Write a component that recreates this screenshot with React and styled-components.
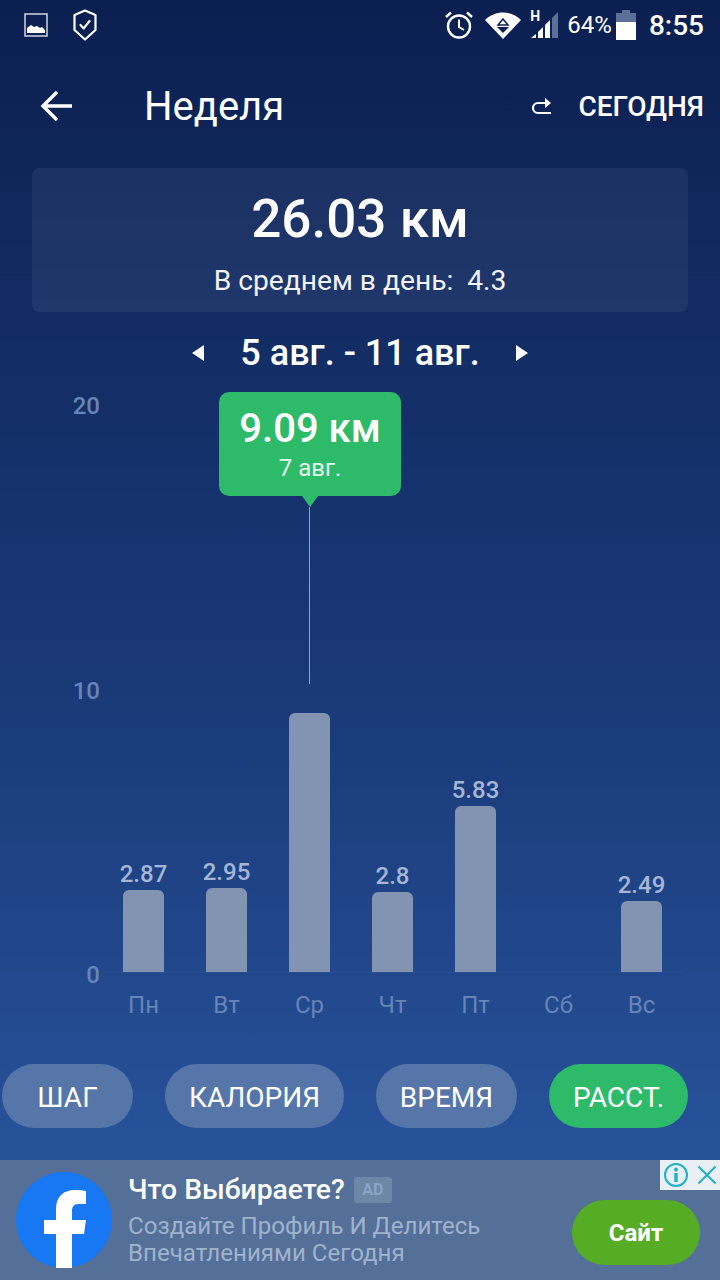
import React from 'react';
import styled, { createGlobalStyle } from 'styled-components';

const days = [
  { name: 'Пн', value: 2.87 },
  { name: 'Вт', value: 2.95 },
  { name: 'Ср', value: 9.09, hideLabel: true },
  { name: 'Чт', value: 2.8 },
  { name: 'Пт', value: 5.83 },
  { name: 'Сб', value: 0 },
  { name: 'Вс', value: 2.49 },
];

const tabs = [
  { label: 'ШАГ' },
  { label: 'КАЛОРИЯ' },
  { label: 'ВРЕМЯ' },
  { label: 'РАССТ.', active: true },
];

const PX_PER_KM = 28.45;

export default function App() {
  return (
    <Screen>
      <GlobalStyle />
      <StatusBar>
        <StatusGroup>
          <svg width="24" height="24" viewBox="0 0 24 24" style={{ marginLeft: 24 }}>
            <rect x="1" y="1" width="22" height="22" fill="none" stroke="#c3cbdc" strokeWidth="1.6" />
            <path d="M3 20v-5l4-3 3 2 3-1 3 2 2-1 3 3v3z" fill="#fff" />
          </svg>
          <svg width="24" height="32" viewBox="0 0 24 32" style={{ marginLeft: 25 }}>
            <path d="M12 1.500 22.500 6v15L12 30.500 1.500 21V6z" fill="none" stroke="#fff" strokeWidth="2.200" strokeLinejoin="round" />
            <path d="M7.500 16l3.200 3.400 5.800-7.400" fill="none" stroke="#fff" strokeWidth="2.200" strokeLinecap="round" strokeLinejoin="round" />
          </svg>
        </StatusGroup>
        <StatusGroup>
          <svg width="30" height="30" viewBox="0 0 30 30" style={{ marginRight: 11 }}>
            <circle cx="15" cy="16.500" r="11" fill="none" stroke="#fff" strokeWidth="2.400" />
            <path d="M15 9.500v7.500l5 3" fill="none" stroke="#fff" strokeWidth="2" />
            <path d="M2 7l5-4.500M28 7l-5-4.500" stroke="#fff" strokeWidth="2.400" />
          </svg>
          <svg width="36" height="28" viewBox="0 0 36 28" style={{ marginRight: 9 }}>
            <path d="M0 9C10-1 26-1 36 9L18 28z" fill="#fff" />
            <path d="M18 8l5 6H13z" fill="none" stroke="#0c2050" strokeWidth="1.500" />
            <path d="M12 16h12l-6 6z" fill="#0c2050" />
          </svg>
          <SignalWrap>
            <SignalType>H</SignalType>
            <svg width="30" height="30" viewBox="0 0 30 30">
              <path d="M1 28l5-4v4zM8 28v-6l5-5v11z" fill="#fff" />
              <path d="M15 28V15l5-5v18z" fill="#fff" />
              <path d="M22 28V8l6-6v26z" fill="#5b6f98" />
            </svg>
          </SignalWrap>
          <Percent>64%</Percent>
          <svg width="20" height="30" viewBox="0 0 20 30" style={{ marginRight: 13 }}>
            <path d="M6 0h8v3h6v9H0V3h6z" fill="#5b6f98" />
            <rect y="12" width="20" height="18" fill="#fff" />
          </svg>
          <Clock>8:55</Clock>
        </StatusGroup>
      </StatusBar>

      <Header>
        <HeaderLeft>
          <svg width="34" height="32" viewBox="0 0 34 32">
            <path d="M32 16H3M17 2 3 16l14 14" fill="none" stroke="#fff" strokeWidth="3.400" />
          </svg>
          <Title>Неделя</Title>
        </HeaderLeft>
        <TodayLink>
          <svg width="22" height="18" viewBox="0 0 22 18">
            <path d="M21 16H8a5 5 0 0 1 0-10h12" fill="none" stroke="#fff" strokeWidth="2.200" />
            <path d="M15 1l6 5-6 5z" fill="#fff" />
          </svg>
          <TodayText>СЕГОДНЯ</TodayText>
        </TodayLink>
      </Header>

      <SummaryCard>
        <Total>26.03 км</Total>
        <Average>В среднем в день:&nbsp; 4.3</Average>
      </SummaryCard>

      <DateRow>
        <Arrow $dir="left" />
        <DateText>5 авг. - 11 авг.</DateText>
        <Arrow $dir="right" />
      </DateRow>

      <Chart>
        <YAxis>
          <YLabel>20</YLabel>
          <YLabel>10</YLabel>
          <YLabel>0</YLabel>
        </YAxis>
        <Plot>
          <Bars>
            {days.map((d) => (
              <BarColumn key={d.name}>
                {d.value > 0 && !d.hideLabel && <BarValue>{d.value}</BarValue>}
                {d.value > 0 && <Bar style={{ height: d.value * PX_PER_KM }} />}
              </BarColumn>
            ))}
          </Bars>
          <DayRow>
            {days.map((d) => (
              <DayName key={d.name}>{d.name}</DayName>
            ))}
          </DayRow>
        </Plot>
        <Tooltip>
          <TooltipValue>9.09 км</TooltipValue>
          <TooltipDate>7 авг.</TooltipDate>
        </Tooltip>
        <Marker />
      </Chart>

      <Tabs>
        {tabs.map((t) => (
          <Tab key={t.label} $active={t.active}>
            {t.label}
          </Tab>
        ))}
      </Tabs>

      <AdBanner>
        <svg width="96" height="96" viewBox="0 0 96 96">
          <circle cx="48" cy="48" r="48" fill="#1877f2" />
          <path d="M40 96V62H28V48h12V37c0-13 8-19 19-19 5 0 8 .5 11 1v13h-7c-6 0-7 3-7 8v8h14l-2 14H56v34z" fill="#fff" />
        </svg>
        <AdText>
          <AdTitleRow>
            <AdTitle>Что Выбираете?</AdTitle>
            <AdBadge>AD</AdBadge>
          </AdTitleRow>
          <AdDescription>
            Создайте Профиль И Делитесь
            <br />
            Впечатлениями Сегодня
          </AdDescription>
        </AdText>
        <AdButton>Сайт</AdButton>
        <AdCorner>
          <svg width="26" height="26" viewBox="0 0 26 26">
            <circle cx="13" cy="13" r="11" fill="none" stroke="#1fb0cc" strokeWidth="2" />
            <path d="M13 11v9" stroke="#1fb0cc" strokeWidth="3.400" />
            <circle cx="13" cy="7.500" r="2" fill="#1fb0cc" />
          </svg>
          <svg width="20" height="20" viewBox="0 0 20 20">
            <path d="M1.500 1.500l17 17M18.500 1.500l-17 17" stroke="#1fb0cc" strokeWidth="2" />
          </svg>
        </AdCorner>
      </AdBanner>
    </Screen>
  );
}

const GlobalStyle = createGlobalStyle`
  html, body {
    margin: 0;
    padding: 0;
  }
  body {
    font-family: Roboto, "Noto Sans", sans-serif;
  }
`;

const Screen = styled.div`
  position: relative;
  width: 720px;
  height: 1280px;
  overflow: hidden;
  display: flex;
  flex-direction: column;
  background: linear-gradient(180deg, #0b1f50 0%, #112a60 20%, #1a3a78 55%, #27529a 90%, #27529a 100%);
  color: #fff;
`;

const StatusBar = styled.div`
  height: 50px;
  padding-right: 16px;
  display: flex;
  justify-content: space-between;
  align-items: center;
`;

const StatusGroup = styled.div`
  display: flex;
  align-items: center;
`;

const SignalWrap = styled.div`
  position: relative;
  width: 30px;
  height: 30px;
  margin-right: 7px;
`;

const SignalType = styled.span`
  position: absolute;
  left: 0;
  top: -2px;
  font-size: 14px;
  font-weight: 700;
`;

const Percent = styled.span`
  font-size: 24px;
  margin-right: 4px;
`;

const Clock = styled.span`
  font-size: 28px;
  font-weight: 500;
`;

const Header = styled.div`
  height: 112px;
  padding: 0 16px 0 40px;
  display: flex;
  justify-content: space-between;
  align-items: center;
`;

const HeaderLeft = styled.div`
  display: flex;
  align-items: center;
  gap: 70px;
`;

const Title = styled.div`
  font-size: 40px;
`;

const TodayLink = styled.div`
  display: flex;
  align-items: center;
  gap: 26px;
`;

const TodayText = styled.div`
  font-size: 28px;
  font-weight: 500;
`;

const SummaryCard = styled.div`
  margin: 6px 32px 0;
  height: 144px;
  border-radius: 8px;
  background: rgba(255, 255, 255, 0.055);
  display: flex;
  flex-direction: column;
  align-items: center;
`;

const Total = styled.div`
  margin-top: 20px;
  font-size: 53px;
  line-height: 62px;
  font-weight: 500;
`;

const Average = styled.div`
  margin-top: 15px;
  font-size: 28.2px;
  line-height: 32px;
  color: #f1f3f8;
`;

const DateRow = styled.div`
  height: 80px;
  padding-top: 2px;
  box-sizing: border-box;
  display: flex;
  justify-content: center;
  align-items: center;
  gap: 36px;
`;

const Arrow = styled.span`
  width: 0;
  height: 0;
  border-top: 8px solid transparent;
  border-bottom: 8px solid transparent;
  ${(p) => (p.$dir === 'left' ? 'border-right: 12px solid #fff;' : 'border-left: 12px solid #fff;')}
`;

const DateText = styled.div`
  font-size: 36px;
  font-weight: 500;
`;

const Chart = styled.div`
  position: relative;
  height: 670px;
  display: flex;
  align-items: flex-start;
`;

const YAxis = styled.div`
  width: 100px;
  height: 597px;
  display: flex;
  flex-direction: column;
  justify-content: space-between;
  align-items: flex-end;
`;

const YLabel = styled.div`
  font-size: 24px;
  line-height: 28px;
  font-weight: 500;
  color: #6685b8;
`;

const Plot = styled.div`
  margin-left: 2px;
  width: 581px;
`;

const Bars = styled.div`
  height: 580px;
  display: flex;
  border-bottom: 1px solid rgba(255, 255, 255, 0.03);
`;

const BarColumn = styled.div`
  flex: 1;
  display: flex;
  flex-direction: column;
  justify-content: flex-end;
  align-items: center;
`;

const BarValue = styled.div`
  font-size: 24px;
  line-height: 28px;
  font-weight: 500;
  color: #a5b6d6;
  margin-bottom: 2px;
`;

const Bar = styled.div`
  width: 41px;
  border-radius: 6px 6px 0 0;
  background: #8394b2;
`;

const DayRow = styled.div`
  display: flex;
  margin-top: 18px;
`;

const DayName = styled.div`
  flex: 1;
  text-align: center;
  font-size: 24px;
  line-height: 28px;
  color: #6685b8;
`;

const Tooltip = styled.div`
  position: absolute;
  left: 219px;
  top: 0;
  width: 182px;
  height: 104px;
  border-radius: 10px;
  background: #2dbb6a;
  display: flex;
  flex-direction: column;
  align-items: center;
  &::after {
    content: '';
    position: absolute;
    left: 83px;
    bottom: -11px;
    border-left: 8px solid transparent;
    border-right: 8px solid transparent;
    border-top: 11px solid #2dbb6a;
  }
`;

const TooltipValue = styled.div`
  margin-top: 15px;
  font-size: 40px;
  line-height: 44px;
  font-weight: 500;
`;

const TooltipDate = styled.div`
  margin-top: 3px;
  font-size: 24px;
  line-height: 28px;
  color: #e4f6ec;
`;

const Marker = styled.div`
  position: absolute;
  left: 309px;
  top: 115px;
  width: 1px;
  height: 177px;
  background: #2fe08a;
`;

const Tabs = styled.div`
  margin-top: 2px;
  padding-left: 2px;
  display: grid;
  grid-template-columns: 131px 179px 141px 139px;
  column-gap: 32px;
`;

const Tab = styled.div`
  height: 64px;
  border-radius: 32px;
  background: ${(p) => (p.$active ? '#2dbb6a' : '#5676a9')};
  display: flex;
  justify-content: center;
  align-items: center;
  font-size: 28px;
  padding-top: 2px;
  box-sizing: border-box;
`;

const AdBanner = styled.div`
  position: relative;
  margin-top: 32px;
  height: 120px;
  padding: 0 20px 0 16px;
  box-sizing: border-box;
  background: #546f98;
  display: flex;
  align-items: center;
`;

const AdText = styled.div`
  margin-left: 16px;
  flex: 1;
`;

const AdTitleRow = styled.div`
  display: flex;
  align-items: center;
  gap: 9px;
`;

const AdTitle = styled.div`
  font-size: 28.3px;
  line-height: 32px;
  font-weight: 500;
`;

const AdBadge = styled.div`
  width: 38px;
  height: 26px;
  border-radius: 3px;
  background: #6b88a6;
  color: #8aa5c4;
  font-size: 16px;
  font-weight: 700;
  display: flex;
  justify-content: center;
  align-items: center;
`;

const AdDescription = styled.div`
  margin-top: 7px;
  font-size: 24.1px;
  line-height: 27px;
  color: #9fb3cd;
`;

const AdButton = styled.div`
  width: 128px;
  height: 65px;
  margin-top: 25px;
  border-radius: 33px;
  background: #57ac26;
  display: flex;
  justify-content: center;
  align-items: center;
  font-size: 24px;
  font-weight: 700;
`;

const AdCorner = styled.div`
  position: absolute;
  top: 0;
  right: 0;
  width: 60px;
  height: 30px;
  background: #e9eff2;
  display: flex;
  justify-content: center;
  align-items: center;
  gap: 8px;
`;
